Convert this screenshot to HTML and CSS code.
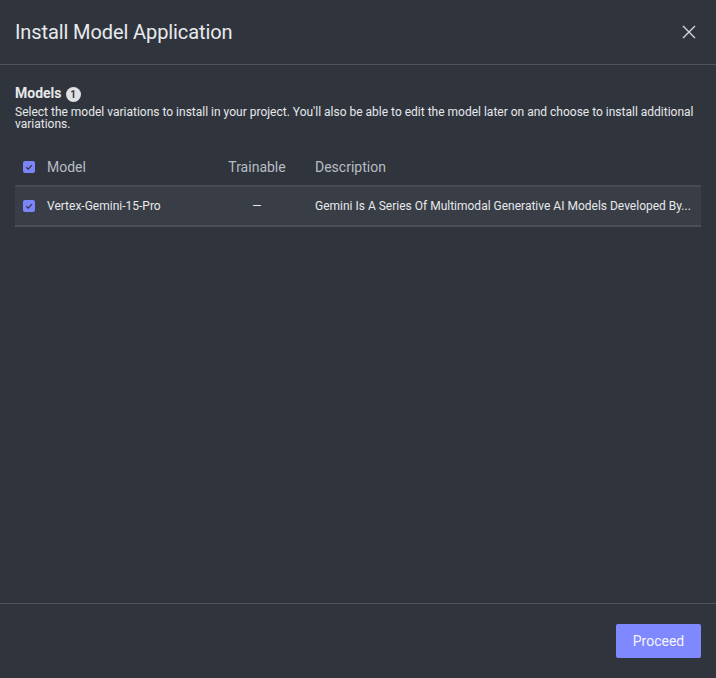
FILE: index.html
```html
<!DOCTYPE html>
<html>
<head>
<meta charset="utf-8">
<link rel="stylesheet" href="styles.css">
</head>
<body>
<div class="dialog">
  <header class="head">
    <h1 class="title">Install Model Application</h1>
    <button class="close" aria-label="Close">
      <svg width="16" height="16" viewBox="0 0 16 16"><path d="M2 2L14 14M14 2L2 14" stroke="#d8dce2" stroke-width="1.3" fill="none"/></svg>
    </button>
  </header>
  <main class="body">
    <div class="section-title">Models <span class="badge">1</span></div>
    <p class="desc">Select the model variations to install in your project. You'll also be able to edit the model later on and choose to install additional variations.</p>
    <div class="table">
      <div class="tr th">
        <div class="c-check"><span class="cb"><svg width="10" height="10" viewBox="0 0 10 10"><path d="M2.2 5.2L4.2 7.1L7.9 3.2" stroke="#2f343c" stroke-width="1.2" fill="none"/></svg></span></div>
        <div class="c-model">Model</div>
        <div class="c-train">Trainable</div>
        <div class="c-desc">Description</div>
      </div>
      <div class="tr row">
        <div class="c-check"><span class="cb"><svg width="10" height="10" viewBox="0 0 10 10"><path d="M2.2 5.2L4.2 7.1L7.9 3.2" stroke="#2f343c" stroke-width="1.2" fill="none"/></svg></span></div>
        <div class="c-model">Vertex-Gemini-15-Pro</div>
        <div class="c-train">—</div>
        <div class="c-desc ellip">Gemini Is A Series Of Multimodal Generative AI Models Developed By...</div>
      </div>
    </div>
  </main>
  <footer class="foot">
    <button class="btn">Proceed</button>
  </footer>
</div>
</body>
</html>
```
FILE: styles.css
```css
html, body { margin: 0; padding: 0; }
body {
  background: #30353d;
  font-family: Roboto, "Noto Sans", sans-serif;
  color: #e6e8eb;
  width: 716px;
  height: 678px;
  overflow: hidden;
}
.dialog {
  display: flex;
  flex-direction: column;
  height: 678px;
}
.head {
  height: 65px;
  box-sizing: border-box;
  border-bottom: 1px solid #4f545b;
  display: flex;
  align-items: center;
  justify-content: space-between;
  padding: 0 19px 0 15px;
}
.title {
  margin: 0;
  font-size: 20px;
  font-weight: 400;
  color: #e8eaed;
  letter-spacing: -0.1px;
}
.close {
  background: none;
  border: 0;
  padding: 0;
  width: 16px;
  height: 16px;
  display: flex;
}
.body {
  flex: 1;
  padding: 19px 15px 0 15px;
}
.section-title {
  font-size: 14px;
  font-weight: 700;
  color: #e6e8eb;
  display: flex;
  align-items: center;
  gap: 4px;
  height: 18px;
}
.badge {
  display: inline-flex;
  align-items: center;
  justify-content: center;
  width: 15px;
  height: 15px;
  border-radius: 50%;
  background: #dfe1e4;
  color: #30353d;
  font-size: 10px;
  font-weight: 700;
  margin-top: 2px;
}
.desc {
  margin: 4px 0 0 0;
  font-size: 12px;
  line-height: 12px;
  color: #e6e8eb;
}
.table {
  margin-top: 19px;
  width: 686px;
}
.tr {
  display: flex;
  align-items: center;
}
.th {
  height: 38px;
  box-sizing: border-box;
  font-size: 14px;
  color: #b7bcc4;
  border-bottom: 2px solid #464b53;
}
.row {
  height: 40px;
  box-sizing: border-box;
  background: #393e46;
  border-bottom: 2px solid #4b5058;
  font-size: 12px;
  color: #e6e8eb;
}
.c-check {
  width: 24px;
  padding-left: 8px;
  display: flex;
}
.cb {
  width: 12px;
  height: 12px;
  background: #7c84fa;
  border-radius: 2px;
  display: flex;
  align-items: center;
  justify-content: center;
}
.c-model { width: 162px; }
.c-train { width: 96px; text-align: center; }
.c-desc { flex: 1; min-width: 0; padding-left: 10px; padding-right: 4px; }
.ellip {
  white-space: nowrap;
  overflow: hidden;
}
.foot {
  height: 75px;
  box-sizing: border-box;
  border-top: 1px solid #4f545b;
  display: flex;
  align-items: center;
  justify-content: flex-end;
  padding: 0 15px;
}
.btn {
  width: 85px;
  height: 34px;
  background: #7f88ff;
  color: #f4f5ff;
  border: 0;
  border-radius: 2px;
  font-family: Roboto, sans-serif;
  font-size: 14px;
}
```
